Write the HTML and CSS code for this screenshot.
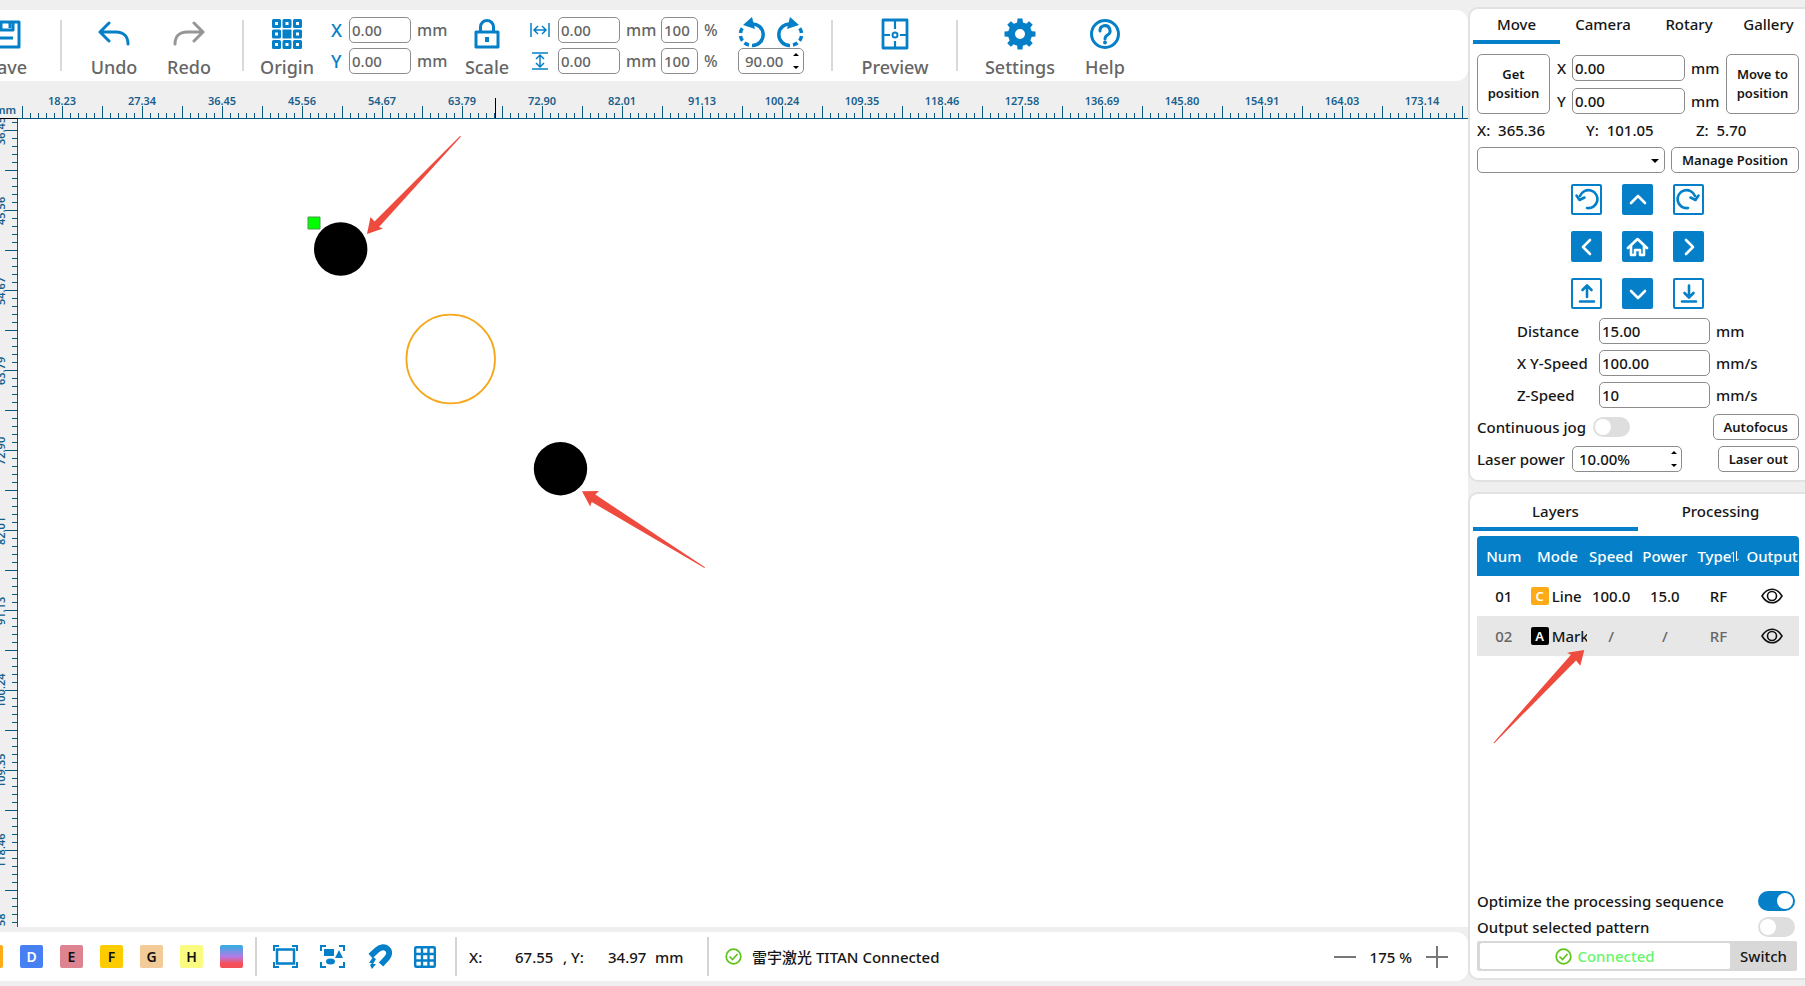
FILE: index.html
```html
<!DOCTYPE html>
<html lang="en">
<head>
<meta charset="utf-8">
<title>Laser workspace</title>
<link rel="stylesheet" href="styles.css">
</head>
<body>
<div class="app">
  <main class="workspace">
    <header class="toolbar">
      <button class="tool tool-save"><svg width="30" height="30" viewBox="0 0 30 30" fill="none" stroke="currentColor" stroke-width="3" stroke-linejoin="round"><path d="M2 3h25v25H2zM9 3v8h12V3M8 19h13"/><path d="M18 3v6"/></svg><span>Save</span></button>
      <span class="sep sep-a"></span>
      <button class="tool tool-undo"><svg width="32" height="30" viewBox="0 0 32 30" fill="none" stroke="currentColor" stroke-width="3" stroke-linecap="round" stroke-linejoin="round"><path d="M11 4 2 13l9 9M2 13h16c8 0 12 5 12 12"/></svg><span>Undo</span></button>
      <button class="tool tool-redo"><svg width="32" height="30" viewBox="0 0 32 30" fill="none" stroke="currentColor" stroke-width="3" stroke-linecap="round" stroke-linejoin="round"><path d="m21 4 9 9-9 9M30 13H14C6 13 2 18 2 25"/></svg><span>Redo</span></button>
      <span class="sep sep-b"></span>
      <button class="tool tool-origin"><svg width="30" height="30" viewBox="0 0 30 30" fill="none" stroke="currentColor" stroke-width="3"><path stroke-linejoin="round" d="M1.500 1.500h6v6h-6zM12 1.500h6v6h-6zM22.500 1.500h6v6h-6zM1.500 12h6v6h-6zM22.500 12h6v6h-6zM1.500 22.500h6v6h-6zM12 22.500h6v6h-6zM22.500 22.500h6v6h-6z"/><path fill="currentColor" d="M12 12h6v6h-6z"/></svg><span>Origin</span></button>
      <div class="fields fields-pos">
        <label class="axis" for="px">X</label><input id="px" class="box" value="0.00"><span class="unit">mm</span>
        <label class="axis" for="py">Y</label><input id="py" class="box" value="0.00"><span class="unit">mm</span>
      </div>
      <button class="tool tool-scale"><svg width="28" height="32" viewBox="0 0 28 32" fill="none" stroke="currentColor" stroke-width="3" stroke-linejoin="round"><path d="M3 14h22v15H3zM7.500 14V9a6.500 6.500 0 0 1 13 0v5"/><path d="M14 19v5" stroke-width="4"/></svg><span>Scale</span></button>
      <div class="fields fields-size">
        <label for="sw" aria-label="Width"><svg width="20" height="18" viewBox="0 0 20 18" fill="none" stroke="currentColor" stroke-width="1.500"><path d="M1 2v14M19 2v14M4 9h12M8 5 4 9l4 4M12 5l4 4-4 4"/></svg></label><input id="sw" class="box" value="0.00"><span class="unit">mm</span><input class="box" aria-label="Width percent" value="100"><span class="unit">%</span>
        <label for="sh" aria-label="Height"><svg width="20" height="20" viewBox="0 0 20 20" fill="none" stroke="currentColor" stroke-width="1.500"><path d="M2 2h16M2 18h16M10 5v10M6 8l4-4 4 4M6 12l4 4 4-4"/></svg></label><input id="sh" class="box" value="0.00"><span class="unit">mm</span><input class="box" aria-label="Height percent" value="100"><span class="unit">%</span>
      </div>
      <div class="rotate">
        <div class="rotate-icons">
          <button aria-label="Rotate left"><svg width="28" height="31" viewBox="0 0 28 31"><path d="M13 7a10.800 10.800 0 1 1 1 21.500" fill="none" stroke="currentColor" stroke-width="3.500"/><path d="M11 28A10.800 10.800 0 0 1 4.500 11" fill="none" stroke="currentColor" stroke-width="3.500" stroke-dasharray="5 3"/><path d="M5 8 14 0l3 12z" fill="currentColor"/></svg></button>
          <button aria-label="Rotate right"><svg width="28" height="31" viewBox="0 0 28 31"><g transform="translate(28) scale(-1 1)"><path d="M13 7a10.800 10.800 0 1 1 1 21.500" fill="none" stroke="currentColor" stroke-width="3.500"/><path d="M11 28A10.800 10.800 0 0 1 4.500 11" fill="none" stroke="currentColor" stroke-width="3.500" stroke-dasharray="5 3"/><path d="M5 8 14 0l3 12z" fill="currentColor"/></g></svg></button>
        </div>
        <div class="spin spin-angle"><input class="box" aria-label="Angle" value="90.00"><svg width="6" height="18" viewBox="0 0 6 18"><path d="M0 4 3 1l3 3zM0 14l3 3 3-3z"/></svg></div>
      </div>
      <span class="sep sep-c"></span>
      <button class="tool tool-preview"><svg width="28" height="32" viewBox="0 0 28 32" fill="none" stroke="currentColor" stroke-width="2.800" stroke-linejoin="round"><path d="M2 2h24v28H2z"/><path stroke-width="2.200" d="M14 2v9M14 23v7M2 17h7M19 17h7"/><circle cx="14" cy="17" r="2.500" stroke-width="2"/></svg><span>Preview</span></button>
      <span class="sep sep-d"></span>
      <button class="tool tool-settings"><svg width="32" height="32" viewBox="-16 -16 32 32"><circle r="8.500" fill="none" stroke="currentColor" stroke-width="7"/><g fill="currentColor"><path id="tooth" d="M-3-10-2.500-15.500h5L3-10z"/><use href="#tooth" transform="rotate(45)"/><use href="#tooth" transform="rotate(90)"/><use href="#tooth" transform="rotate(135)"/><use href="#tooth" transform="rotate(180)"/><use href="#tooth" transform="rotate(225)"/><use href="#tooth" transform="rotate(270)"/><use href="#tooth" transform="rotate(315)"/></g></svg><span>Settings</span></button>
      <button class="tool tool-help"><svg width="32" height="32" viewBox="0 0 32 32" fill="none" stroke="currentColor" stroke-width="3"><circle cx="16" cy="16" r="13.500"/><path d="M11 13a5 5 0 1 1 7.500 4c-2 1.200-2.500 2-2.500 4" stroke-linecap="round"/><circle cx="16" cy="24.500" r="1.900" fill="currentColor" stroke="none"/></svg><span>Help</span></button>
    </header>

    <section class="stage">
      <div class="corner">mm</div>
      <div class="ruler-x">
        <span>18.23</span><span>27.34</span><span>36.45</span><span>45.56</span><span>54.67</span><span>63.79</span><span>72.90</span><span>82.01</span><span>91.13</span><span>100.24</span><span>109.35</span><span>118.46</span><span>127.58</span><span>136.69</span><span>145.80</span><span>154.91</span><span>164.03</span><span>173.14</span>
        <i class="cursor-x"></i>
      </div>
      <div class="ruler-y">
        <div class="labels-y"><span>36.45</span><span>45.56</span><span>54.67</span><span>63.79</span><span>72.90</span><span>82.01</span><span>91.13</span><span>100.24</span><span>109.35</span><span>118.46</span><span>127.58</span></div>
      </div>
      <div class="canvas">
        <svg width="720" height="480" viewBox="18 119 720 480">
          <circle cx="340.700" cy="249" r="26.700"/>
          <circle cx="560.500" cy="468.700" r="26.700"/>
          <circle cx="450.700" cy="359" r="44.300" fill="none" stroke="#f5a81c" stroke-width="1.800"/>
          <path d="M308 217h12v12h-12z" fill="#0f0" stroke="#4a9a4a"/>
          <path class="mark" d="m367 234 3.500-17 4 4.500L460 136l1 .5L379 227l4 1.500z"/>
          <path class="mark" d="m582 491.300 17-.2-3.700 3.500 109.700 72.600-.6.800L591.700 502l-1.500 4.500z"/>
        </svg>
      </div>
    </section>

    <footer class="statusbar">
      <div class="swatches">
        <button class="swatch sw-c" aria-label="C"></button><button class="swatch sw-d">D</button><button class="swatch sw-e">E</button><button class="swatch sw-f">F</button><button class="swatch sw-g">G</button><button class="swatch sw-h">H</button><button class="swatch sw-mix" aria-label="Gradient"></button>
      </div>
      <div class="view-tools">
        <button aria-label="Fit frame"><svg width="25" height="23" viewBox="0 0 25 23" fill="none" stroke="currentColor" stroke-width="2"><path d="M1 6V1h5M19 1h5v5M24 17v5h-5M6 22H1v-5"/><path stroke-width="2.500" d="M4 4.500h17v14H4z"/></svg></button>
        <button aria-label="Fit selection"><svg width="25" height="23" viewBox="0 0 25 23" fill="none" stroke="currentColor" stroke-width="2"><path d="M1 6V1h5M19 1h5v5M24 17v5h-5M6 22H1v-5"/><path fill="currentColor" stroke="none" d="M4 4h10v7H4zM19 5l4 8h-8z"/><ellipse cx="10.500" cy="16.500" rx="4.500" ry="3" fill="currentColor" stroke="none"/></svg></button>
        <button aria-label="Snap"><svg width="25" height="25" viewBox="0 0 25 25"><path d="M3.500 12 10 6c8-7 16 1 10 8l-6 6.500" fill="none" stroke="currentColor" stroke-width="6"/><path d="m6 13-4 6h3l-2 2 2 4 4-5H6l3-5z" fill="currentColor"/></svg></button>
        <button aria-label="Grid"><svg width="22" height="22" viewBox="0 0 22 22" fill="none" stroke="currentColor" stroke-width="2.400"><rect x="1.200" y="1.200" width="19.600" height="19.600" rx="1"/><path d="M8 1v20M14.500 1v20M1 8h20M1 14.500h20"/></svg></button>
      </div>
      <div class="coords"><span>X:</span><span>67.55</span><span>, Y:</span><span>34.97</span><span>mm</span></div>
      <div class="device"><svg width="17" height="17" viewBox="0 0 17 17" fill="none" stroke="#5cc41a" stroke-width="1.700"><circle cx="8.500" cy="8.500" r="7.300"/><path d="m4.500 8.500 3 3 5-5.500"/></svg><span>雷宇激光 TITAN Connected</span></div>
      <div class="zoom">
        <button aria-label="Zoom out"><svg width="22" height="22" viewBox="0 0 22 22" stroke="currentColor" stroke-width="2"><path d="M0 11h22"/></svg></button>
        <span>175 %</span>
        <button aria-label="Zoom in"><svg width="22" height="22" viewBox="0 0 22 22" stroke="currentColor" stroke-width="2"><path d="M0 11h22M11 0v22"/></svg></button>
      </div>
    </footer>
  </main>

  <aside class="side">
    <section class="panel panel-move">
      <nav class="tabs tabs-top"><button class="tab on">Move</button><button class="tab">Camera</button><button class="tab">Rotary</button><button class="tab">Gallery</button></nav>
      <div class="panel-body">
        <div class="goto">
          <button class="btn">Get<br>position</button>
          <div class="goto-fields">
            <label for="gx">X</label><input id="gx" class="box" value="0.00"><span>mm</span>
            <label for="gy">Y</label><input id="gy" class="box" value="0.00"><span>mm</span>
          </div>
          <button class="btn">Move to<br>position</button>
        </div>
        <div class="readout"><span>X:&nbsp; 365.36</span><span>Y:&nbsp; 101.05</span><span>Z:&nbsp; 5.70</span></div>
        <div class="manage"><span class="combo"><select class="box" aria-label="Saved position"><option></option></select></span><button class="btn">Manage Position</button></div>
        <div class="pad">
          <button class="key line" aria-label="Rotate counterclockwise"><svg viewBox="0 0 31 31"><path d="M16 24a9 9 0 1 0-7-12M5.500 11.500l3 4.500 5-2.500"/></svg></button>
          <button class="key" aria-label="Up"><svg viewBox="0 0 31 31"><path d="m9 19 7-7 7 7"/></svg></button>
          <button class="key line" aria-label="Rotate clockwise"><svg viewBox="0 0 31 31"><path d="M15 24a9 9 0 1 1 7-12M25.500 11.500l-3 4.500-5-2.500"/></svg></button>
          <button class="key" aria-label="Left"><svg viewBox="0 0 31 31"><path d="m19 9-7 7 7 7"/></svg></button>
          <button class="key" aria-label="Home"><svg viewBox="0 0 31 31"><path d="m6 17 9.500-9 9.500 9M9 15v9h4v-5h5v5h4v-9"/></svg></button>
          <button class="key" aria-label="Right"><svg viewBox="0 0 31 31"><path d="m13 9 7 7-7 7"/></svg></button>
          <button class="key line" aria-label="Z up"><svg viewBox="0 0 31 31"><path d="M16 19V8M11.500 12 16 7.500l4.500 4.500M9 23.500h14"/></svg></button>
          <button class="key" aria-label="Down"><svg viewBox="0 0 31 31"><path d="m9 13 7 7 7-7"/></svg></button>
          <button class="key line" aria-label="Z down"><svg viewBox="0 0 31 31"><path d="M16 7.500V19M11.500 15l4.500 4.500 4.500-4.500M9 23.500h14"/></svg></button>
        </div>
        <div class="motion">
          <label for="dist">Distance</label><input id="dist" class="box" value="15.00"><span>mm</span>
          <label for="xys">X Y-Speed</label><input id="xys" class="box" value="100.00"><span>mm/s</span>
          <label for="zs">Z-Speed</label><input id="zs" class="box" value="10"><span>mm/s</span>
        </div>
        <div class="line-row"><label for="jog">Continuous jog</label><input id="jog" class="toggle" type="checkbox"><button class="btn push">Autofocus</button></div>
        <div class="line-row"><label for="lp">Laser power</label><span class="spin spin-power"><input id="lp" class="box" value="10.00%"><svg width="6" height="18" viewBox="0 0 6 18"><path d="M0 4 3 1l3 3zM0 14l3 3 3-3z"/></svg></span><button class="btn push">Laser out</button></div>
      </div>
    </section>

    <section class="panel panel-layers">
      <nav class="tabs tabs-half"><button class="tab on">Layers</button><button class="tab">Processing</button></nav>
      <div class="panel-body">
        <table class="layers">
          <thead><tr><th>Num</th><th>Mode</th><th>Speed</th><th>Power</th><th>Type<svg width="8" height="11" viewBox="0 0 8 11" fill="none" stroke="currentColor"><path d="M0 3.500 2.500 1v10M8 7.500 5.500 10V0"/></svg></th><th>Output</th></tr></thead>
          <tbody>
            <tr><td>01</td><td><div class="mode"><b class="chip chip-c">C</b>Line</div></td><td>100.0</td><td>15.0</td><td>RF</td><td><button aria-label="Toggle output 01"><svg width="22" height="16" viewBox="0 0 22 16" fill="none" stroke="#111" stroke-width="1.600"><path d="M1 8c5.500-9 14.500-9 20 0-5.500 9-14.500 9-20 0z"/><circle cx="11" cy="8" r="4.500"/></svg></button></td></tr>
            <tr class="dim"><td>02</td><td><div class="mode"><b class="chip chip-a">A</b>Mark</div></td><td>/</td><td>/</td><td>RF</td><td><button aria-label="Toggle output 02"><svg width="22" height="16" viewBox="0 0 22 16" fill="none" stroke="#111" stroke-width="1.600"><path d="M1 8c5.500-9 14.500-9 20 0-5.500 9-14.500 9-20 0z"/><circle cx="11" cy="8" r="4.500"/></svg></button></td></tr>
          </tbody>
        </table>
        <svg class="callout" width="92" height="95" viewBox="1493 650 92 95"><path class="mark" d="m1584.300 651-17.300 2.700 4 2-77.500 88 .8.500L1576 661.500l4.300 5.200z"/></svg>
        <div class="options">
          <div class="option"><label for="opt">Optimize the processing sequence</label><input id="opt" class="toggle" type="checkbox" checked></div>
          <div class="option"><label for="sel">Output selected pattern</label><input id="sel" class="toggle" type="checkbox"></div>
          <div class="link"><div class="link-state"><svg width="17" height="17" viewBox="0 0 17 17" fill="none" stroke="#5cc41a" stroke-width="1.700"><circle cx="8.500" cy="8.500" r="7.300"/><path d="m4.500 8.500 3 3 5-5.500"/></svg>Connected</div><button>Switch</button></div>
        </div>
      </div>
    </section>
  </aside>
</div>
</body>
</html>
```
FILE: styles.css
```css
:root {
  --blue: #0580c8;
  --ink: #161616;
  --gray: #666;
  --edge: #8c8c8c;
  --ruler: #0b5a80;
}

* { box-sizing: border-box; }

body {
  margin: 0;
  background: #efefef;
  color: var(--ink);
  font: 500 15px/20px "Noto Sans", "Noto Sans CJK SC", sans-serif;
}

button {
  padding: 0;
  border: 0;
  background: none;
  color: inherit;
  font: inherit;
  white-space: nowrap;
}

svg { display: block; flex: none; }

.app {
  display: grid;
  grid-template: minmax(0, 1fr) / minmax(0, 1fr) 337px;
  height: 100vh;
  overflow: hidden;
}

.workspace {
  display: flex;
  flex-direction: column;
  min-width: 0;
  padding: 10px 0 5px;
}

/* Toolbar */
.toolbar {
  display: flex;
  align-items: center;
  flex: none;
  height: 71px;
  overflow: hidden;
  background: #fff;
  border-radius: 0 12px 12px 0;
  color: var(--gray);
}

.tool {
  display: flex;
  flex-direction: column;
  align-items: center;
  justify-content: space-between;
  flex: none;
  width: 52px;
  height: 66px;
  padding-top: 5px;
  font-size: 18px;
  line-height: 24px;
}
.tool svg { color: var(--blue); height: 32px; }
.tool-redo svg { color: #969696; }
.tool-save { margin-left: -19px; }
.tool-redo { margin-left: 23px; }
.tool-scale { margin-left: 16px; }
.tool-preview { width: 72px; }
.tool-settings { width: 72px; }
.tool-help { margin-left: 23px; }

.sep {
  flex: none;
  width: 2px;
  height: 51px;
  background: #d9d9d9;
}
.sep-a { margin: 0 26px 0 27px; }
.sep-b { margin: 0 17px 0 27px; }
.sep-c { margin: 0 26px 0 27px; }
.sep-d { margin: 0 26px 0 25px; }

.box {
  width: 100%;
  height: 26px;
  padding: 0 2px;
  border: 1px solid var(--edge);
  border-radius: 5px;
  background: #fff;
  color: inherit;
  font: inherit;
}

.fields {
  display: grid;
  align-items: center;
  row-gap: 5px;
  flex: none;
}
.fields label { color: var(--blue); }
.fields-pos {
  grid-template-columns: 18px 62px 34px;
  margin-left: 18px;
}
.fields-size {
  grid-template-columns: 28px 62px 41px 37px 23px;
  margin-left: 17px;
}
.axis { font-size: 18px; }
.unit { padding-left: 6px; font-size: 16px; }

.rotate {
  display: flex;
  flex-direction: column;
  flex: none;
  width: 66px;
  margin-left: 17px;
}
.rotate-icons {
  display: flex;
  justify-content: space-between;
  color: var(--blue);
}
.spin { position: relative; display: block; }
.spin svg { position: absolute; right: 5px; top: 4px; fill: #000; }
.spin .box { padding-left: 6px; }
.spin-power { width: 110px; margin-left: 7px; }

/* Rulers and drawing area */
.stage {
  display: grid;
  grid-template: 38px minmax(0, 1fr) / 18px minmax(0, 1fr);
  flex: 1;
  min-height: 0;
  overflow: hidden;
  color: #17608c;
  font-size: 11px;
  font-weight: 600;
  line-height: 12px;
}
.corner {
  display: flex;
  justify-content: flex-end;
  align-items: flex-end;
  padding: 0 2px 2px 0;
  border-bottom: 1px solid #000;
  overflow: hidden;
}
.ruler-x {
  position: relative;
  display: flex;
  padding: 14px 0 0 4px;
  overflow: hidden;
  border-bottom: 1px solid var(--ruler);
  background:
    repeating-linear-gradient(to right, var(--ruler) 0 1px, transparent 1px 8px) 4px 100% / 100% 5px no-repeat,
    repeating-linear-gradient(to right, var(--ruler) 0 1px, transparent 1px 40px) 4px 100% / 100% 12px no-repeat;
}
.ruler-x span { flex: 0 0 80px; text-align: center; }
.cursor-x {
  position: absolute;
  left: 477px;
  bottom: 0;
  width: 1px;
  height: 20px;
  background: #000;
}
.ruler-y {
  overflow: hidden;
  border-right: 1px solid var(--ruler);
  background:
    repeating-linear-gradient(to bottom, transparent 0 3px, var(--ruler) 3px 4px, transparent 4px 8px) 100% 0 / 5px 100% no-repeat,
    repeating-linear-gradient(to bottom, transparent 0 11px, var(--ruler) 11px 12px, transparent 12px 40px) 100% 0 / 12px 100% no-repeat;
}
.labels-y { margin: -28px 0 0 -5px; }
.labels-y span {
  display: block;
  width: 12px;
  height: 80px;
  text-align: center;
  writing-mode: vertical-rl;
  transform: rotate(180deg);
}
.canvas { overflow: hidden; background: #fff; }
.mark { fill: #ee4b3e; }

/* Status bar */
.statusbar {
  display: flex;
  align-items: center;
  flex: none;
  height: 49px;
  margin-top: 5px;
  overflow: hidden;
  background: #fff;
  border-radius: 0 12px 12px 0;
}
.swatches { display: flex; flex: none; gap: 17px; margin-left: -20px; }
.swatch {
  width: 23px;
  height: 23px;
  border-radius: 2px;
  color: #111;
  font-size: 14px;
  font-weight: 600;
}
.sw-c { background: #fdab16; }
.sw-d { background: #4680f2; color: #fff; }
.sw-e { background: #dd8490; }
.sw-f { background: #fccb00; }
.sw-g { background: #f2cb98; }
.sw-h { background: #fbfb82; }
.sw-mix { background: linear-gradient(#2fb0e0, #b27be8 50%, #f5505a 80%); }

.view-tools,
.coords,
.device {
  display: flex;
  align-items: center;
  flex: none;
  height: 39px;
  border-left: 2px solid #d4d4d4;
}
.view-tools { width: 200px; gap: 22px; margin-left: 12px; padding-left: 16px; color: var(--blue); }
.coords { width: 252px; padding-left: 12px; }
.coords span:nth-child(1) { width: 46px; }
.coords span:nth-child(2) { width: 48px; }
.coords span:nth-child(3) { width: 45px; }
.coords span:nth-child(4) { width: 47px; }
.device { gap: 10px; padding-left: 16px; }
.zoom {
  display: flex;
  align-items: center;
  gap: 14px;
  margin: 0 20px 0 auto;
}
.zoom button { color: #777; }

/* Side column */
.side {
  display: flex;
  flex-direction: column;
  gap: 10px;
  min-width: 0;
  padding: 7px 0 6px;
}
.panel {
  position: relative;
  border: 2px solid #e2e2e2;
  border-right: 0;
  border-radius: 10px 0 0 10px;
  background: #fff;
}
.panel-body { padding: 0 6px 0 7px; }
.panel-move { flex: none; padding-bottom: 8px; }
.panel-layers { display: flex; flex-direction: column; flex: 1; min-height: 0; padding-top: 2px; }
.panel-layers .panel-body { display: flex; flex-direction: column; flex: 1; }

.tabs { display: grid; padding-left: 3px; }
.tabs-top { grid-template-columns: 87px 86px 86px 1fr; }
.tabs-half { grid-template-columns: 165px 165px; }
.tab { height: 35px; padding-bottom: 2px; border-bottom: 4px solid transparent; }
.tab.on { border-color: var(--blue); }

.btn {
  height: 26px;
  border: 1px solid var(--edge);
  border-radius: 5px;
  background: #fff;
  font-size: 13px;
  font-weight: 600;
  line-height: 19px;
}
.goto { display: grid; grid-template-columns: 73px 1fr 73px; padding-top: 10px; }
.goto .btn { height: 60px; }
.goto-fields {
  display: grid;
  grid-template-columns: 15px 113px 1fr;
  align-items: center;
  row-gap: 6px;
  padding-left: 7px;
}
.goto-fields span { padding-left: 6px; }
.readout { display: grid; grid-template-columns: 109px 110px 1fr; padding: 6px 0 7px; }
.manage { display: grid; grid-template-columns: 1fr 128px; gap: 6px; }
.combo { position: relative; }
.combo .box { display: block; appearance: none; }
.combo::after {
  content: "";
  position: absolute;
  right: 6px;
  top: 12px;
  border: 4px solid transparent;
  border-top-color: #000;
  border-bottom: 0;
}

.pad {
  display: grid;
  grid-template-columns: repeat(3, 31px);
  gap: 16px 20px;
  padding: 11px 0 9px 94px;
}
.key { height: 31px; border-radius: 2px; background: var(--blue); color: #fff; }
.key.line { background: #fff; color: var(--blue); box-shadow: inset 0 0 0 2px var(--blue); }
.key svg {
  width: 31px;
  height: 31px;
  fill: none;
  stroke: currentColor;
  stroke-width: 2.6;
  stroke-linecap: round;
  stroke-linejoin: round;
}

.motion {
  display: grid;
  grid-template-columns: 82px 111px 1fr;
  align-items: center;
  row-gap: 6px;
  padding-left: 40px;
}
.motion span { padding-left: 6px; }
.line-row { display: flex; align-items: center; height: 26px; margin-top: 6px; }
.line-row .toggle { margin-left: 7px; }
.push { margin-left: auto; padding: 0 10px; }

.toggle {
  appearance: none;
  flex: none;
  width: 37px;
  height: 20px;
  margin: 0;
  padding: 2px;
  border-radius: 10px;
  background: #dedede;
}
.toggle::before {
  content: "";
  display: block;
  width: 16px;
  height: 16px;
  border-radius: 50%;
  background: #fff;
}
.toggle:checked { background: var(--blue); }
.toggle:checked::before { margin-left: auto; }

/* Layer table */
.layers {
  width: 100%;
  margin-top: 5px;
  border-collapse: separate;
  border-spacing: 0;
  table-layout: fixed;
}
.layers th {
  height: 40px;
  padding: 0;
  background: var(--blue);
  color: #fff;
  font-weight: 500;
  white-space: nowrap;
}
.layers th:first-child { border-top-left-radius: 4px; }
.layers th:last-child { border-top-right-radius: 4px; }
.layers th svg { display: inline-block; }
.layers td { height: 40px; padding: 0; text-align: center; }
.layers td button { display: block; margin: 0 auto; }
.dim td { background: #e7e7e7; color: var(--gray); }
.mode { display: flex; align-items: center; gap: 3px; margin-right: -3px; overflow: hidden; color: var(--ink); }
.chip {
  flex: none;
  width: 18px;
  height: 18px;
  border-radius: 2px;
  color: #fff;
  font-size: 13px;
  font-weight: 600;
  line-height: 18px;
}
.chip-c { background: #fdab16; }
.chip-a { background: #000; }
.callout { position: absolute; left: 23px; top: 155px; }

.options { margin-top: auto; padding-bottom: 7px; }
.option { display: flex; align-items: center; justify-content: space-between; height: 26px; padding-right: 4px; }
.link {
  display: flex;
  height: 30px;
  margin: 1px 2px 0 0;
  padding: 2px 0 2px 3px;
  border-radius: 2px;
  background: #d8d8d8;
}
.link-state {
  display: flex;
  align-items: center;
  justify-content: center;
  gap: 5px;
  flex: 1;
  border-radius: 2px;
  background: #fff;
  color: #66f56a;
}
.link button { width: 67px; }
```
